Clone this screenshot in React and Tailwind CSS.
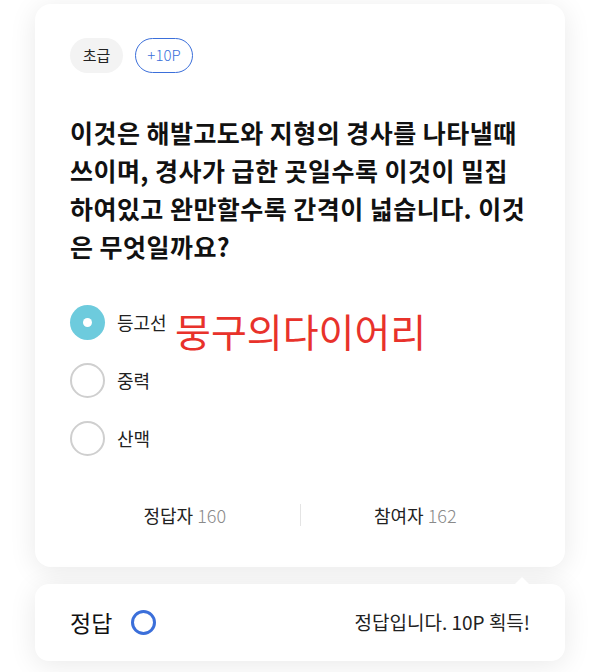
const font = { fontFamily: '"Noto Sans CJK KR", "Noto Sans", sans-serif' };

const questionLines = [
  "이것은 해발고도와 지형의 경사를 나타낼때",
  "쓰이며, 경사가 급한 곳일수록 이것이 밀집",
  "하여있고 완만할수록 간격이 넓습니다. 이것",
  "은 무엇일까요?",
];

const options = [
  { label: "등고선", selected: true },
  { label: "중력", selected: false },
  { label: "산맥", selected: false },
];

const Radio = ({ selected }) =>
  selected ? (
    <span className="flex h-[35px] w-[35px] items-center justify-center rounded-full bg-[#6dcbdd]">
      <span className="h-[9px] w-[9px] rounded-full bg-white" />
    </span>
  ) : (
    <span className="h-[35px] w-[35px] rounded-full border-2 border-[#cfcfcf] bg-white" />
  );

export default function App() {
  return (
    <div className="min-h-[672px] bg-white px-[35px] pt-[4px] pb-[11px]" style={font}>
      {/* 문제 카드 */}
      <div className="rounded-[16px] bg-white px-[35px] pt-[34px] pb-[30px] shadow-[0_4px_28px_rgba(0,0,0,0.09)]">
        <div className="flex gap-[12px]">
          <span className="flex h-[35px] w-[53px] items-center justify-center rounded-full bg-[#f3f3f3] text-[15px] text-[#222]">
            초급
          </span>
          <span className="flex h-[35px] w-[58px] items-center justify-center rounded-full border-[1.5px] border-[#3b6fda] text-[15px] font-light text-[#3b6fda]">
            +10P
          </span>
        </div>

        <div className="mt-[40px] text-[25px] font-bold leading-[38px] tracking-[0.45px] text-[#111]">
          {questionLines.map((l) => (
            <div key={l} className="whitespace-nowrap">{l}</div>
          ))}
        </div>

        <div className="relative mt-[28px]">
          {options.map((o) => (
            <div key={o.label} className="flex h-[58px] items-center gap-[12px]">
              <Radio selected={o.selected} />
              <span className="text-[18px] text-[#222]">{o.label}</span>
            </div>
          ))}
          {/* 워터마크 */}
          <span className="absolute left-[105px] top-[14px] text-[39px] leading-[46px] text-[#e8322b]">
            뭉구의다이어리
          </span>
        </div>

        <div className="mt-[26px] flex h-[44px] items-center text-[18px]">
          <div className="flex-1 text-center text-[#222]">
            정답자 <span className="font-light text-[#8a8a8a]">160</span>
          </div>
          <span className="h-[22px] w-px bg-[#e4e4e4]" />
          <div className="flex-1 text-center text-[#222]">
            참여자 <span className="font-light text-[#8a8a8a]">162</span>
          </div>
        </div>
      </div>

      {/* 결과 카드 */}
      <div className="relative mt-[17px] flex h-[77px] items-center justify-between rounded-[14px] bg-white px-[35px] shadow-[0_4px_28px_rgba(0,0,0,0.09)]">
        <span className="absolute right-[35px] top-[-7px] h-0 w-0 border-x-[8px] border-b-[8px] border-x-transparent border-b-white" />
        <div className="flex items-center gap-[19px]">
          <span className="text-[23px] text-[#111]">정답</span>
          <span className="h-[25px] w-[25px] rounded-full border-[3.5px] border-[#3b6fda]" />
        </div>
        <span className="text-[19px] text-[#222]">정답입니다. 10P 획득!</span>
      </div>
    </div>
  );
}
